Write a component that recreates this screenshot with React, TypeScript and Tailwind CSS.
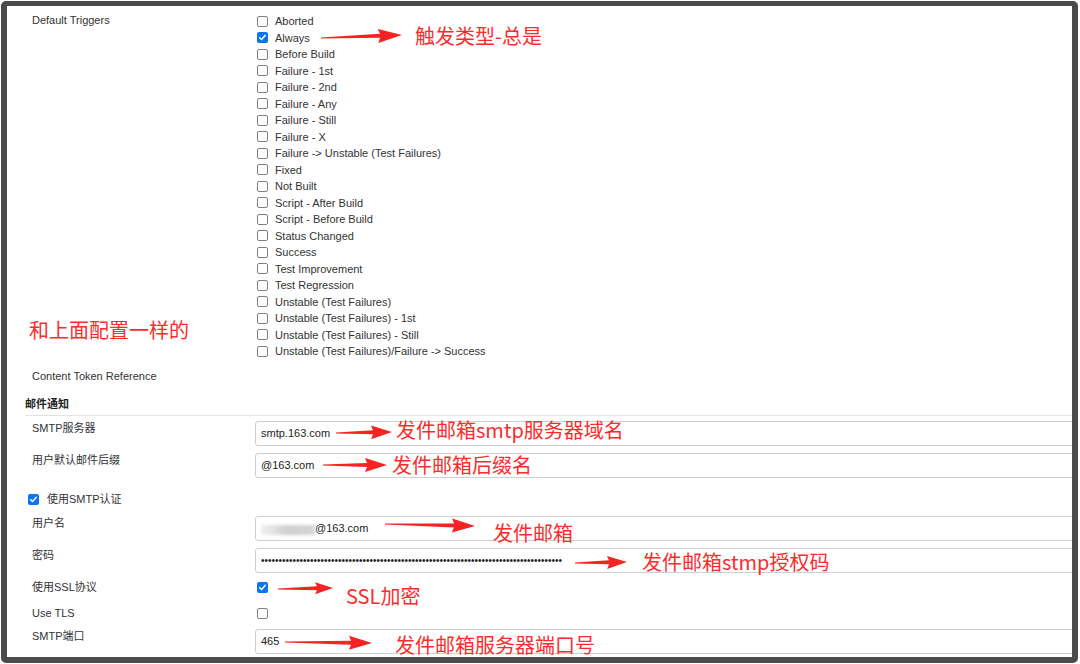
import React from "react";

const triggers = [
  "Aborted",
  "Always",
  "Before Build",
  "Failure - 1st",
  "Failure - 2nd",
  "Failure - Any",
  "Failure - Still",
  "Failure - X",
  "Failure -> Unstable (Test Failures)",
  "Fixed",
  "Not Built",
  "Script - After Build",
  "Script - Before Build",
  "Status Changed",
  "Success",
  "Test Improvement",
  "Test Regression",
  "Unstable (Test Failures)",
  "Unstable (Test Failures) - 1st",
  "Unstable (Test Failures) - Still",
  "Unstable (Test Failures)/Failure -> Success",
];

function Box({ checked }: { checked?: boolean }) {
  if (checked) {
    return (
      <span className="flex h-[11px] w-[11px] shrink-0 items-center justify-center rounded-[2px] bg-[#0a74f0]">
        <svg width="9" height="9" viewBox="0 0 9 9">
          <path
            d="M1.7 4.7 L3.6 6.5 L7.3 2.3"
            stroke="white"
            strokeWidth="1.5"
            fill="none"
            strokeLinecap="round"
            strokeLinejoin="round"
          />
        </svg>
      </span>
    );
  }
  return <span className="block h-[11px] w-[11px] shrink-0 rounded-[2px] border border-[#808080] bg-white" />;
}

function InputRow({ label, mt, children }: { label: string; mt: string; children: React.ReactNode }) {
  return (
    <div className={`flex pl-[25px] ${mt}`}>
      <div className="w-[223px] shrink-0 leading-[14px]">{label}</div>
      <div className="-mr-[6px] flex h-[25px] flex-1 items-center rounded-[3px] border border-[#cfcfcf] pl-[5px] text-[#222]">
        {children}
      </div>
    </div>
  );
}

function arrowPoints(x1: number, y1: number, x2: number, y2: number, head = 19, hw = 7, sw = 2) {
  const dx = x2 - x1;
  const dy = y2 - y1;
  const L = Math.hypot(dx, dy);
  const ux = dx / L;
  const uy = dy / L;
  const nx = -uy;
  const ny = ux;
  const pt = (a: number, b: number) => `${(x1 + ux * a + nx * b).toFixed(2)},${(y1 + uy * a + ny * b).toFixed(2)}`;
  return [
    pt(0, -0.4),
    pt(L - head, -sw),
    pt(L - head - 2, -hw),
    pt(L, 0),
    pt(L - head - 2, hw),
    pt(L - head, sw),
    pt(0, 0.4),
  ].join(" ");
}

const arrows: [number, number, number, number, number, number][] = [
  [321, 38, 402, 35, 22, 7],
  [336, 433, 392, 432, 19, 7],
  [323, 465, 387, 465, 20, 7],
  [385, 524, 475, 526, 21, 7],
  [575, 563, 627, 562, 18, 6.5],
  [278, 589, 333, 588, 16, 6],
  [285, 642, 372, 643, 21, 7],
];

const notes: { text: string; x: number; y: number }[] = [
  { text: "触发类型-总是", x: 415, y: 36 },
  { text: "和上面配置一样的", x: 29, y: 330 },
  { text: "发件邮箱smtp服务器域名", x: 396, y: 430 },
  { text: "发件邮箱后缀名", x: 392, y: 465 },
  { text: "发件邮箱", x: 493, y: 533 },
  { text: "发件邮箱stmp授权码", x: 642, y: 562 },
  { text: "SSL加密", x: 346, y: 596 },
  { text: "发件邮箱服务器端口号", x: 395, y: 645 },
];

export default function App() {
  return (
    <div className="relative h-[664px] w-[1080px] overflow-hidden bg-white pl-[1px] pt-[1px] font-['Liberation_Sans','Noto_Sans_CJK_SC',sans-serif] text-[11px] text-[#333]">
      <div className="h-[662px] w-[1077px] overflow-hidden rounded-[5px] border-[6px] border-t-[5px] border-[#4b4b4b] bg-white">
        <div className="flex flex-col pt-[7px]">
          <div className="flex pl-[25px]">
            <div className="-mt-[1px] w-[223px] shrink-0 leading-[16.5px]">Default Triggers</div>
            <div className="flex flex-col">
              {triggers.map((t) => (
                <div key={t} className="flex h-[16.5px] items-center gap-[7px] pl-[2px]">
                  <Box checked={t === "Always"} />
                  <span className="whitespace-nowrap">{t}</span>
                </div>
              ))}
            </div>
          </div>

          <div className="mt-[8.5px] h-[16px] pl-[25px] leading-[16px]">Content Token Reference</div>
          <div className="mt-[12px] h-[16px] pl-[18px] font-bold leading-[16px] text-[#222]">邮件通知</div>
          <div className="ml-[18px] mt-[3px] h-px bg-[#e2e2e2]" />

          <InputRow label="SMTP服务器" mt="mt-[5px]">
            smtp.163.com
          </InputRow>
          <InputRow label="用户默认邮件后缀" mt="mt-[7px]">
            @163.com
          </InputRow>

          <div className="mt-[13px] flex h-[16px] items-center gap-[8px] pl-[21px]">
            <Box checked />
            <span>使用SMTP认证</span>
          </div>

          <InputRow label="用户名" mt="mt-[9px]">
            <span className="mt-[2px] h-[10px] w-[54px] bg-gradient-to-r from-[#f2f2f2] via-[#cfcfcf] to-[#d6d6d6] blur-[1.5px]" />
            <span>@163.com</span>
          </InputRow>
          <InputRow label="密码" mt="mt-[7px]">
            <span className="whitespace-nowrap text-[10px] leading-[10px] text-[#222]">{"•".repeat(86)}</span>
          </InputRow>

          <div className="mt-[6px] flex h-[16px] items-center pl-[25px]">
            <div className="w-[223px] shrink-0">使用SSL协议</div>
            <div className="flex pl-[2px]">
              <Box checked />
            </div>
          </div>
          <div className="mt-[10px] flex h-[16px] items-center pl-[25px]">
            <div className="w-[223px] shrink-0">Use TLS</div>
            <div className="flex pl-[2px]">
              <Box />
            </div>
          </div>

          <InputRow label="SMTP端口" mt="mt-[8px]">
            465
          </InputRow>
        </div>
      </div>

      <svg className="pointer-events-none absolute left-0 top-0" width="1080" height="664">
        {arrows.map(([x1, y1, x2, y2, h, hw], i) => (
          <polygon key={i} points={arrowPoints(x1, y1, x2, y2, h, hw)} fill="#f52323" />
        ))}
      </svg>
      {notes.map((n) => (
        <div
          key={n.text}
          className="pointer-events-none absolute whitespace-nowrap font-['Noto_Sans_CJK_SC',sans-serif] text-[20px] leading-[24px] text-[#fd2c2c]"
          style={{ left: n.x, top: n.y - 12 }}
        >
          {n.text}
        </div>
      ))}
    </div>
  );
}
